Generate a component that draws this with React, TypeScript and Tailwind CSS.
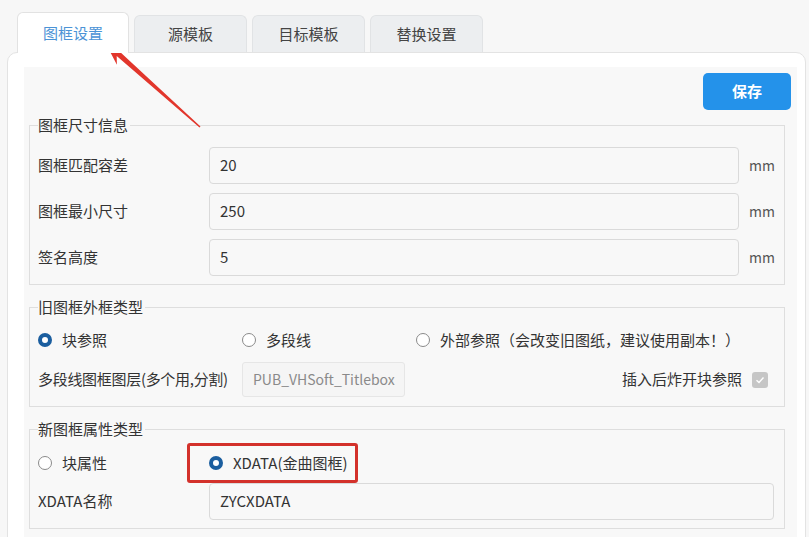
const font = "font-['Segoe_UI','Noto_Sans_CJK_SC',sans-serif]";

const tabs = ["图框设置", "源模板", "目标模板", "替换设置"];

const Radio = ({ checked, label }: { checked?: boolean; label: string }) => (
  <div className="flex items-center gap-[10px] h-[20px]">
    {checked ? (
      <span className="w-[14px] h-[14px] rounded-full border-[4px] border-[#1b5e9f] bg-white shrink-0" />
    ) : (
      <span className="w-[14px] h-[14px] rounded-full border border-[#8a8a8a] bg-white shrink-0" />
    )}
    <span className="text-[15px] leading-[20px] text-[#333] whitespace-nowrap">{label}</span>
  </div>
);

const Field = ({ value, h = "h-[37px]" }: { value: string; h?: string }) => (
  <div
    className={`${h} flex-1 flex items-center pl-[10px] border border-[#dadada] rounded-[4px] bg-[#f8f8f8] text-[15px] text-[#333]`}
  >
    {value}
  </div>
);

const Legend = ({ text }: { text: string }) => (
  <legend className="text-[15px] leading-[20px] text-[#333] pr-[2px]">{text}</legend>
);

export default function App() {
  return (
    <div className={`relative w-[809px] h-[537px] overflow-hidden bg-[#f7f7f7] ${font}`}>
      {/* tab strip */}
      <div className="flex items-end gap-[5px] pl-[17px] pt-[12px]">
        {tabs.map((t, i) =>
          i === 0 ? (
            <div
              key={t}
              className="relative z-10 -mb-px w-[112px] h-[41px] flex items-center justify-center bg-white border border-b-0 border-[#e2e2e2] rounded-t-[6px] text-[15px] text-[#4b93d6]"
            >
              {t}
            </div>
          ) : (
            <div
              key={t}
              className="w-[113px] h-[37px] flex items-center justify-center bg-[#eceef0] border border-b-0 border-[#e1e3e5] rounded-t-[6px] text-[15px] text-[#444]"
            >
              {t}
            </div>
          )
        )}
      </div>

      {/* card */}
      <div className="ml-[7px] w-[799px] h-[500px] bg-white border border-[#e3e3e3] rounded-t-[10px] pl-[16px] pr-[8px] pt-[14px]">
        <div className="bg-[#f8f8f8] h-full pt-[6px]">
          <div className="flex justify-end pr-[6px]">
            <button className="w-[88px] h-[37px] rounded-[5px] bg-[#2492ea] text-white text-[15px] font-bold">
              保存
            </button>
          </div>

          {/* frame size */}
          <fieldset className="ml-[5px] mr-[12px] mt-[5px] border border-[#dedede] px-[8px] pr-[10px] pt-[12px] pb-[8px] min-w-0">
            <Legend text="图框尺寸信息" />
            <div className="flex flex-col gap-[9px]">
              {[
                ["图框匹配容差", "20"],
                ["图框最小尺寸", "250"],
                ["签名高度", "5"],
              ].map(([label, v]) => (
                <div key={label} className="flex items-center">
                  <span className="w-[171px] text-[15px] text-[#333]">{label}</span>
                  <Field value={v} />
                  <span className="w-[35px] pl-[10px] text-[14px] text-[#555]">mm</span>
                </div>
              ))}
            </div>
          </fieldset>

          {/* old frame outline */}
          <fieldset className="ml-[5px] mr-[12px] mt-[12px] border border-[#dedede] px-[8px] pr-[10px] pt-[13px] pb-[9px] min-w-0">
            <Legend text="旧图框外框类型" />
            <div className="flex items-center">
              <div className="w-[204px]">
                <Radio checked label="块参照" />
              </div>
              <div className="w-[174px]">
                <Radio label="多段线" />
              </div>
              <Radio label="外部参照（会改变旧图纸，建议使用副本！）" />
            </div>
            <div className="flex items-center mt-[12px]">
              <span className="w-[204px] text-[15px] text-[#333] whitespace-nowrap tracking-[-0.3px]">
                多段线图框图层(多个用,分割)
              </span>
              <div className="w-[163px] h-[35px] flex items-center pl-[10px] border border-[#e6e6e6] rounded-[3px] bg-[#f5f5f5] text-[14px] text-[#8a8a8a] whitespace-nowrap overflow-hidden">
                PUB_VHSoft_Titlebox
              </div>
              <div className="flex-1 flex items-center justify-end gap-[10px] pr-[6px]">
                <span className="text-[15px] text-[#333]">插入后炸开块参照</span>
                <span className="w-[16px] h-[16px] rounded-[3px] bg-[#c6c6c6] flex items-center justify-center">
                  <svg width="10" height="10" viewBox="0 0 10 10">
                    <path d="M1.5 5.2 L4 7.5 L8.5 2.5" fill="none" stroke="#fff" strokeWidth="1.4" />
                  </svg>
                </span>
              </div>
            </div>
          </fieldset>

          {/* new frame attributes */}
          <fieldset className="ml-[5px] mr-[12px] mt-[12px] border border-[#dedede] px-[8px] pr-[10px] pt-[14px] pb-[8px] min-w-0">
            <Legend text="新图框属性类型" />
            <div className="flex items-center">
              <div className="w-[171px]">
                <Radio label="块属性" />
              </div>
              <div className="relative">
                <Radio checked label="XDATA(金曲图框)" />
                <div className="absolute left-[-22px] top-[-10px] w-[171px] h-[40px] border-[3px] border-[#d3312b] rounded-[3px]" />
              </div>
            </div>
            <div className="flex items-center mt-[10px]">
              <span className="w-[171px] text-[15px] text-[#333]">XDATA名称</span>
              <Field value="ZYCXDATA" />
            </div>
          </fieldset>
        </div>
      </div>

      {/* pointer arrow */}
      <svg className="absolute left-0 top-0 pointer-events-none" width="809" height="537">
        <polygon
          points="105,42 116.9,64.7 116.7,55.9 199.5,127.5 200.5,126.5 120.1,52.1 128.9,51.3"
          fill="#e2362c"
        />
      </svg>
    </div>
  );
}
